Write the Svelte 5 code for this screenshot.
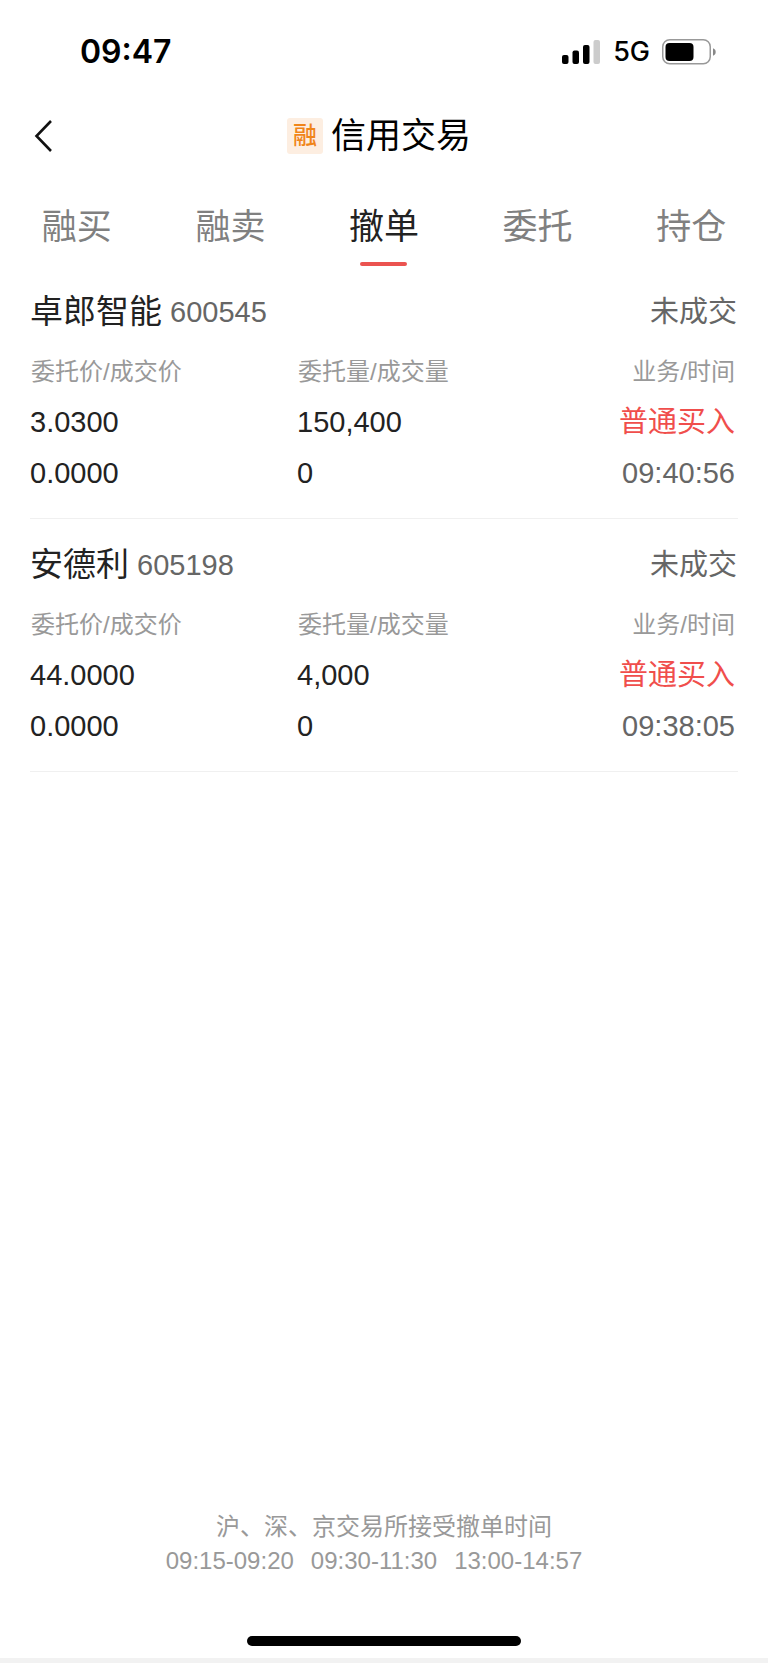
<script>
  const tabs = ['融买', '融卖', '撤单', '委托', '持仓'];

  const orders = [
    {
      name: '卓郎智能',
      code: '600545',
      status: '未成交',
      price: '3.0300',
      dealPrice: '0.0000',
      amount: '150,400',
      dealAmount: '0',
      business: '普通买入',
      time: '09:40:56',
    },
    {
      name: '安德利',
      code: '605198',
      status: '未成交',
      price: '44.0000',
      dealPrice: '0.0000',
      amount: '4,000',
      dealAmount: '0',
      business: '普通买入',
      time: '09:38:05',
    },
  ];

  const periods = ['09:15-09:20', '09:30-11:30', '13:00-14:57'];

  let active = $state('撤单');
</script>

<div class="page">
  <div class="status-bar">
    <span class="clock">09:47</span>
    <div class="indicators">
      <svg class="signal" width="39" height="24" viewBox="0 0 39 24">
        <rect x="0" y="15" width="6.5" height="9" rx="2" />
        <rect x="10.5" y="10.5" width="6.5" height="13.5" rx="2" />
        <rect x="21" y="5" width="6.5" height="19" rx="2" />
        <rect x="31.5" y="0" width="6.5" height="24" rx="2" fill="#ccc" />
      </svg>
      <span class="network">5G</span>
      <svg class="battery" width="54" height="26" viewBox="0 0 54 26">
        <rect x="0.75" y="0.75" width="47.5" height="24" rx="7" fill="none" stroke="#999" stroke-width="1.5" />
        <rect x="3.5" y="4" width="28" height="18" rx="4" />
        <path d="M51 9.200c2 .8 2.700 2.100 2.700 3.800s-.7 3-2.700 3.800z" fill="#888" />
      </svg>
    </div>
  </div>

  <header class="header">
    <button class="back" type="button" aria-label="返回">
      <svg width="18" height="32" viewBox="0 0 18 32">
        <path d="M17 1L2.500 16 17 31" fill="none" stroke="#111" stroke-width="2.600" />
      </svg>
    </button>
    <h1 class="title">
      <span class="badge">融</span>
      <span>信用交易</span>
    </h1>
  </header>

  <nav class="tabs">
    {#each tabs as tab}
      <button
        class="tab"
        class:active={tab === active}
        type="button"
        onclick={() => (active = tab)}
      >
        {tab}
      </button>
    {/each}
  </nav>

  <main class="orders">
    {#each orders as order}
      <section class="order">
        <div class="order-head">
          <h2 class="name">{order.name}</h2>
          <span class="code">{order.code}</span>
          <span class="state">{order.status}</span>
        </div>
        <table>
          <thead>
            <tr>
              <th>委托价/成交价</th>
              <th>委托量/成交量</th>
              <th>业务/时间</th>
            </tr>
          </thead>
          <tbody>
            <tr>
              <td>{order.price}</td>
              <td>{order.amount}</td>
              <td class="buy">{order.business}</td>
            </tr>
            <tr>
              <td>{order.dealPrice}</td>
              <td>{order.dealAmount}</td>
              <td class="time">{order.time}</td>
            </tr>
          </tbody>
        </table>
      </section>
    {/each}
  </main>

  <footer class="footer">
    <p class="tip">沪、深、京交易所接受撤单时间</p>
    <p class="periods">
      {#each periods as period}
        <span>{period}</span>
      {/each}
    </p>
    <div class="home-bar"></div>
  </footer>
</div>

<style>
  :global(body) {
    background: #fff;
    margin: 0;
  }
  .page {
    border-bottom: 5px solid #f2f2f2;
    box-sizing: border-box;
    color: #222;
    display: flex;
    flex-direction: column;
    font-family: 'Liberation Sans', 'Noto Sans CJK SC', sans-serif;
    min-height: 100vh;
  }
  h1,
  h2,
  p {
    font-weight: 400;
    margin: 0;
  }
  button {
    background: none;
    border: 0;
    color: inherit;
    cursor: pointer;
    font-family: inherit;
    padding: 0;
  }
  .status-bar {
    align-items: center;
    color: #000;
    display: flex;
    font-family: Inter, sans-serif;
    height: 102px;
    justify-content: space-between;
    padding: 0 52px 0 80px;
  }
  .clock {
    font-size: 32px;
    font-weight: 600;
  }
  .indicators {
    align-items: center;
    display: flex;
    gap: 12px;
    padding-top: 1px;
  }
  .network {
    font-size: 27px;
    font-weight: 500;
  }
  .header {
    align-items: center;
    display: grid;
    grid-template-columns: 60px 1fr 70px;
    height: 68px;
  }
  .back {
    display: flex;
    padding-left: 34px;
  }
  .title {
    align-items: center;
    color: #000;
    display: flex;
    font-size: 35px;
    gap: 8px;
    justify-content: center;
    line-height: 48px;
  }
  .badge {
    background: #fdeee1;
    border-radius: 3px;
    color: #f08519;
    font-size: 24px;
    font-weight: 500;
    height: 36px;
    line-height: 36px;
    text-align: center;
    width: 36px;
  }
  .tabs {
    display: grid;
    grid-template-columns: repeat(5, 1fr);
  }
  .tab {
    align-items: center;
    color: #808080;
    display: flex;
    flex-direction: column;
    font-size: 35px;
    height: 96px;
    line-height: 48px;
    padding-top: 33px;
  }
  .tab.active {
    color: #222;
  }
  .tab.active::after {
    background: #eb5350;
    border-radius: 2px;
    content: '';
    height: 4px;
    margin-top: 11px;
    width: 47px;
  }
  .orders {
    flex: 1;
    padding: 0 30px;
  }
  .order {
    border-bottom: 1px solid #f0f0f0;
    padding: 21px 0 19px;
  }
  .order-head {
    align-items: center;
    display: flex;
    gap: 8px;
    line-height: 50px;
    margin-bottom: 8px;
  }
  .name {
    font-size: 33px;
  }
  .code {
    color: #666;
    font-size: 29px;
  }
  .state {
    color: #666;
    font-size: 29px;
    margin-left: auto;
    padding-right: 1px;
  }
  table {
    border-collapse: collapse;
    table-layout: fixed;
    width: 100%;
  }
  th,
  td {
    font-size: 29px;
    font-weight: 400;
    height: 51px;
    line-height: 51px;
    padding: 0;
    text-align: left;
  }
  th {
    color: #999;
    font-size: 24px;
    height: 52px;
    padding-left: 1px;
  }
  th:first-child {
    width: 266px;
  }
  th:last-child,
  td:last-child {
    padding-right: 3px;
    text-align: right;
  }
  .buy {
    color: #f04e4c;
  }
  .time {
    color: #666;
  }
  .footer {
    align-items: center;
    color: #999;
    display: flex;
    flex-direction: column;
    font-size: 24px;
    line-height: 34px;
    padding-bottom: 12px;
  }
  .periods {
    display: flex;
    gap: 17px;
    padding-right: 20px;
  }
  .home-bar {
    background: #000;
    border-radius: 5px;
    height: 10px;
    margin-top: 58px;
    width: 274px;
  }
</style>
